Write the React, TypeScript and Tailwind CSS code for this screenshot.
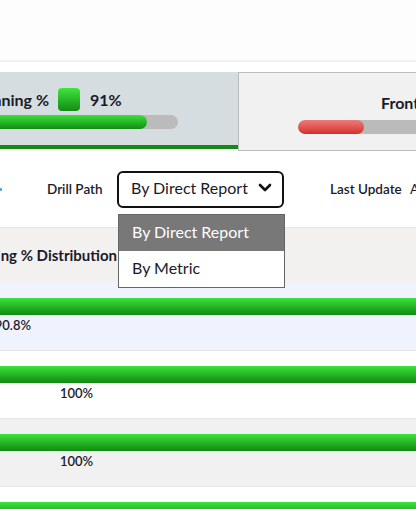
import React from "react";

const rows = [
  { bg: "bg-[#f0f3fd]", value: "90.8%", clipped: true },
  { bg: "bg-white", value: "100%", clipped: false },
  { bg: "bg-[#f1f1f1]", value: "100%", clipped: false },
  { bg: "bg-white", value: "100%", clipped: false },
];

function Chevron() {
  return (
    <svg width="14" height="9" viewBox="0 0 14 9" className="shrink-0">
      <polyline points="2,2 7,7 12,2" fill="none" stroke="#111" strokeWidth="2.6" strokeLinecap="round" strokeLinejoin="round" />
    </svg>
  );
}

export default function App() {
  return (
    <div className="w-[416px] h-[509px] overflow-hidden bg-white font-['Lato','Liberation_Sans',sans-serif] text-[#1a1a2a]">
      <div className="h-[62px] bg-[#fdfdfd] border-b-2 border-[#f0f0f0]" />
      <div className="h-[10px]" />

      {/* metric tabs */}
      <div className="flex items-start">
        <div className="w-[238px] h-[77px] shrink-0 bg-[#d6dde0] border-b-4 border-[#168816] pt-[16px]">
          <div className="flex items-center h-[23px] text-[16px] font-bold whitespace-nowrap">
            <div className="w-[49px] shrink-0 flex justify-end">
              <span>On-Time Planning %</span>
            </div>
            <div className="ml-[9px] w-[22px] h-[23px] shrink-0 rounded-[4px] bg-gradient-to-b from-[#3ee63e] to-[#128c12]" />
            <span className="ml-[10px]">91%</span>
          </div>
          <div className="mt-[4px] -ml-[40px] w-[218px] h-[14px] rounded-full bg-[#bbbbbb] overflow-hidden">
            <div className="w-[187px] h-full rounded-full bg-gradient-to-b from-[#3ae33a] to-[#128c12]" />
          </div>
        </div>
        <div className="flex-1 h-[79px] bg-[#f1f1f1] border-t border-b border-l border-[#bdbdbd] pt-[20px] overflow-hidden">
          <div className="ml-[142px] text-[16px] font-bold leading-[19px] whitespace-nowrap">Front Desk %</div>
          <div className="mt-[8px] ml-[59px] w-[300px] h-[14px] rounded-full bg-[#bbbbbb] overflow-hidden">
            <div className="w-[66px] h-full rounded-full bg-gradient-to-b from-[#ec7a7a] to-[#d42a2a]" />
          </div>
        </div>
      </div>

      {/* filters */}
      <div className="h-[76px] flex items-center whitespace-nowrap">
        <div className="w-[2px] h-[3px] shrink-0 bg-[#3b9ae1] rounded-full" />
        <div className="ml-[45px] w-[56px] shrink-0 text-[13.5px] font-semibold">Drill Path</div>
        <div className="relative ml-[14px] w-[167px] h-[37px] shrink-0">
          <div className="h-full border-2 border-[#111] rounded-[6px] flex items-center justify-between pl-[12px] pr-[10px] pb-[3px] text-[16px]">
            <span>By Direct Report</span>
            <Chevron />
          </div>
          <div className="absolute z-10 top-[43px] left-[1px] w-[167px] border border-[#666] bg-white text-[16px]">
            <div className="h-[36px] bg-[#787878] text-white flex items-center pl-[13px] pb-[2px]">By Direct Report</div>
            <div className="h-[36px] flex items-center pl-[13px] pb-[2px]">By Metric</div>
          </div>
        </div>
        <div className="ml-[46px] w-[71px] shrink-0 text-[13.5px] font-semibold">Last Update</div>
        <span className="ml-[9px] shrink-0 text-[13.5px]">Apr 12, 2024</span>
      </div>

      {/* table header */}
      <div className="h-[56px] bg-[#f2f1f0] border-t border-[#e6e6e6] flex items-center whitespace-nowrap">
        <div className="w-[117px] shrink-0 flex justify-end">
          <span className="text-[15px] font-bold">On-Time Planning % Distribution</span>
        </div>
      </div>

      {/* rows */}
      {rows.map((r, i) => (
        <div key={i} className={`h-[68px] ${r.bg} border-b border-[#e6e6e6] pt-[15px]`}>
          <div className="h-[17px] bg-gradient-to-b from-[#3be33b] to-[#118a11]" />
          {r.clipped ? (
            <div className="mt-[2px] w-[31px] flex justify-end whitespace-nowrap">
              <span className="text-[13px] font-semibold leading-[16px]">{r.value}</span>
            </div>
          ) : (
            <div className="mt-[2px] pl-[60px] text-[13px] font-semibold leading-[16px]">{r.value}</div>
          )}
        </div>
      ))}
    </div>
  );
}
